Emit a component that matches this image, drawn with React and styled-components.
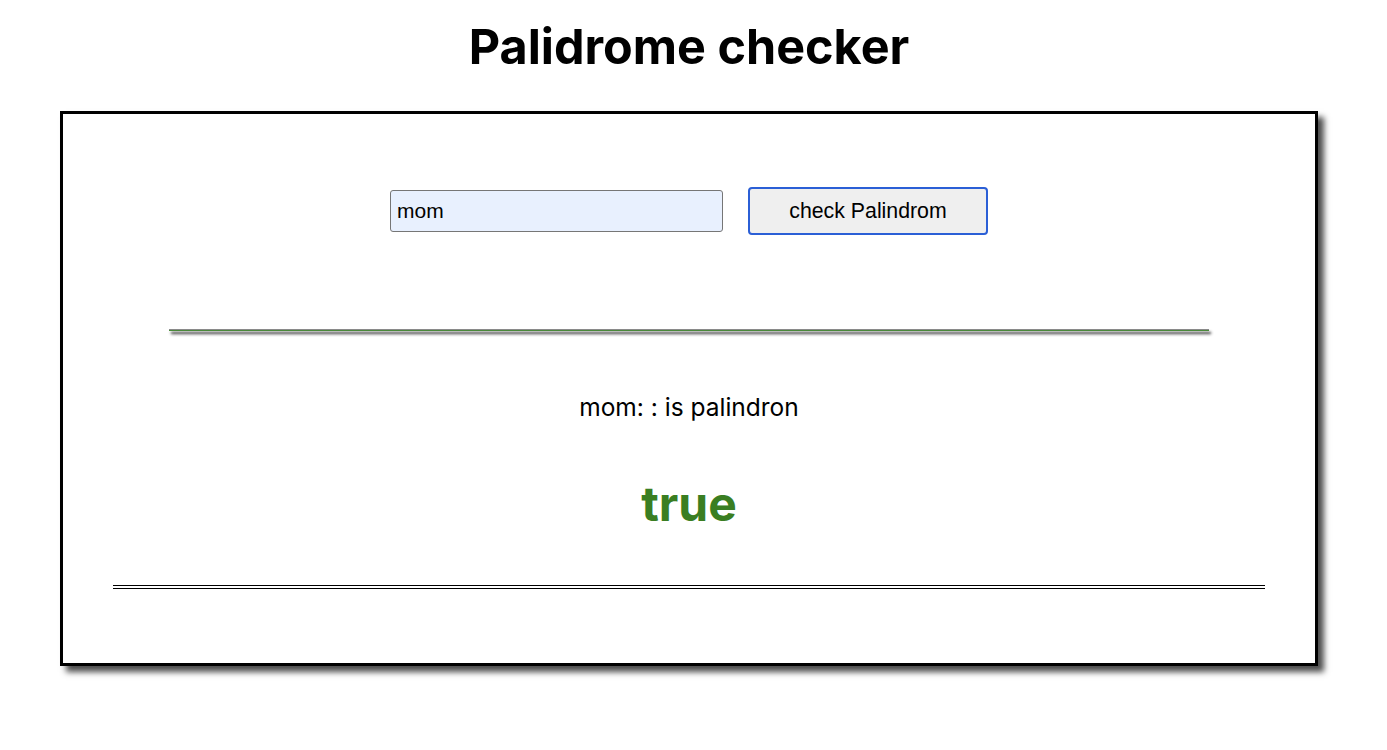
import React, { useState } from "react";
import styled, { createGlobalStyle } from "styled-components";

const Global = createGlobalStyle`
  html, body { margin: 0; padding: 0; background: #fff; }
  body { font-family: Inter, "Noto Sans", sans-serif; color: #000; }
`;

const Page = styled.div`
  padding: 18px 9px 40px 0;
  display: flex;
  flex-direction: column;
  align-items: center;
`;

const Title = styled.h1`
  margin: 0;
  font-family: Inter, sans-serif;
  font-weight: 700;
  font-size: 48.5px;
  line-height: 58px;
  letter-spacing: 0;
`;

const Card = styled.section`
  margin-top: 35px;
  width: 1258px;
  box-sizing: border-box;
  border: 3px solid #000;
  box-shadow: 6px 6px 6px rgba(0, 0, 0, 0.7);
  padding: 73px 0 74px;
  display: flex;
  flex-direction: column;
  align-items: center;
`;

const Row = styled.form`
  display: flex;
  align-items: center;
  gap: 25px;
`;

const Input = styled.input`
  box-sizing: border-box;
  width: 333px;
  height: 42px;
  padding: 0 6px;
  border: 1px solid #767676;
  border-radius: 3px;
  background: #e8f0fe;
  font-family: "Liberation Sans", Arial, sans-serif;
  font-size: 21px;
  color: #000;
  outline: none;
`;

const Button = styled.button`
  box-sizing: border-box;
  width: 240px;
  height: 48px;
  border: 2px solid #2b5fd6;
  border-radius: 4px;
  background: #efefef;
  font-family: "Liberation Sans", Arial, sans-serif;
  font-size: 21.3px;
  color: #000;
  cursor: pointer;
`;

const ShadowRule = styled.hr`
  margin: 94px 0 0;
  width: 1040px;
  height: 1px;
  border: none;
  border-top: 1px solid #8a8a8a;
  background: #4a8a3a;
  box-shadow: 2px 3px 3px rgba(0, 0, 0, 0.85);
`;

const Message = styled.p`
  margin: 62px 0 0;
  font-size: 24.5px;
  line-height: 29px;
  font-weight: 400;
`;

const Result = styled.div`
  margin-top: 53px;
  font-size: 48px;
  line-height: 58px;
  font-weight: 700;
  color: ${(p) => (p.$ok ? "#3a7e22" : "#c62828")};
`;

const DoubleRule = styled.hr`
  margin: 52px 0 0;
  width: 1152px;
  height: 0;
  border: none;
  border-top: 4px double #000;
`;

export default function App() {
  const [value, setValue] = useState("mom");
  const [checked, setChecked] = useState("mom");
  const clean = checked.toLowerCase().replace(/[^a-z0-9]/g, "");
  const ok = clean === clean.split("").reverse().join("");
  return (
    <>
      <Global />
      <Page>
        <Title>Palidrome checker</Title>
        <Card>
          <Row
            onSubmit={(e) => {
              e.preventDefault();
              setChecked(value);
            }}
          >
            <Input value={value} onChange={(e) => setValue(e.target.value)} />
            <Button type="submit">check Palindrom</Button>
          </Row>
          <ShadowRule />
          <Message>{checked}: : is palindron</Message>
          <Result $ok={ok}>{ok ? "true" : "false"}</Result>
          <DoubleRule />
        </Card>
      </Page>
    </>
  );
}
